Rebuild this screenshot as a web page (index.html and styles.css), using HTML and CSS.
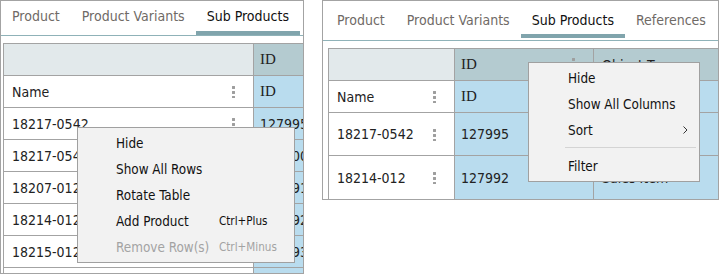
FILE: index.html
```html
<!DOCTYPE html>
<html>
<head>
<title>Sub Products</title>
<link rel="stylesheet" href="styles.css">
</head>
<body>

<div class="panel panel--rows">
  <div class="tabs">
    <div class="tab">Product</div>
    <div class="tab">Product Variants</div>
    <div class="tab tab--active">Sub Products</div>
  </div>
  <div class="tabla tabla--rows">
    <div class="celda celda--esquina"></div>
    <div class="celda celda--cabecera"><span class="serif">ID</span></div>

    <div class="celda">Name<span class="kebab"></span></div>
    <div class="celda celda--azul"><span class="serif">ID</span></div>

    <div class="celda">18217-0542<span class="kebab"></span></div>
    <div class="celda celda--azul">127995</div>
    <div class="celda">18217-0543<span class="kebab"></span></div>
    <div class="celda celda--azul">127900</div>
    <div class="celda">18207-0123<span class="kebab"></span></div>
    <div class="celda celda--azul">127991</div>
    <div class="celda">18214-012<span class="kebab"></span></div>
    <div class="celda celda--azul">127992</div>
    <div class="celda">18215-012<span class="kebab"></span></div>
    <div class="celda celda--azul">127993</div>
    <div class="celda">18216-012<span class="kebab"></span></div>
    <div class="celda celda--azul">127994</div>
  </div>

  <div class="menu menu--rows">
    <div class="menu__item">Hide</div>
    <div class="menu__item">Show All Rows</div>
    <div class="menu__item">Rotate Table</div>
    <div class="menu__item">Add Product<span class="menu__atajo">Ctrl+Plus</span></div>
    <div class="menu__item menu__item--off">Remove Row(s)<span class="menu__atajo">Ctrl+Minus</span></div>
  </div>
</div>

<div class="panel panel--cols">
  <div class="tabs">
    <div class="tab">Product</div>
    <div class="tab">Product Variants</div>
    <div class="tab tab--active">Sub Products</div>
    <div class="tab">References</div>
  </div>
  <div class="tabla tabla--cols">
    <div class="celda celda--esquina"></div>
    <div class="celda celda--cabecera"><span class="serif">ID</span><span class="kebab kebab--top"></span></div>
    <div class="celda celda--cabecera">Object Type</div>

    <div class="celda">Name<span class="kebab"></span></div>
    <div class="celda celda--azul"><span class="serif">ID</span></div>
    <div class="celda celda--azul">Object Type</div>

    <div class="celda">18217-0542<span class="kebab"></span></div>
    <div class="celda celda--azul">127995</div>
    <div class="celda celda--azul">Sales Item</div>

    <div class="celda">18214-012<span class="kebab"></span></div>
    <div class="celda celda--azul">127992</div>
    <div class="celda celda--azul">Sales Item</div>
  </div>

  <div class="menu menu--cols">
    <div class="menu__item">Hide</div>
    <div class="menu__item">Show All Columns</div>
    <div class="menu__item">Sort
      <svg class="menu__flecha" width="5" height="8" viewBox="0 0 5 8"><polyline points="0.5,0.5 4,4 0.5,7.5" fill="none" stroke="#333" stroke-width="1"/></svg>
    </div>
    <div class="menu__linea"></div>
    <div class="menu__item">Filter</div>
  </div>
</div>

</body>
</html>
```
FILE: styles.css
```css
html {
  font-family: "DejaVu Sans Condensed", "DejaVu Sans", sans-serif;
  font-size: 14px;
  color: #222;
}

body {
  margin: 0;
  display: flex;
  align-items: flex-start;
  gap: 18px;
  background: #fff;
}

.panel {
  position: relative;
  box-sizing: border-box;
  border: 1px solid #a3a3a3;
  overflow: hidden;
}

.panel--rows {
  width: 304px;
  height: 274px;
}

.panel--cols {
  width: 397px;
  height: 200px;
}

/* pestañas */

.tabs {
  display: flex;
  border-bottom: 1px solid #8fb2b8;
}

.panel--rows .tabs {
  height: 34px;
}

.panel--cols .tabs {
  height: 37px;
  padding: 0 0 2px 3px;
}

.tab {
  display: flex;
  align-items: center;
  padding: 0 11px;
  color: #6f6a66;
  white-space: nowrap;
}

.panel--rows .tab {
  padding-bottom: 4px;
}

.tab--active {
  color: #111;
  box-shadow: inset 0 -4px #80a4ac;
}

/* tabla */

.tabla {
  display: grid;
  width: max-content;
  border-top: 1px solid #a3a3a3;
  border-left: 1px solid #a3a3a3;
  margin-top: 7px;
}

.tabla--rows {
  margin-left: 2px;
  grid-template-columns: 250px 140px;
  grid-auto-rows: 32px;
}

.tabla--cols {
  margin-left: 5px;
  grid-template-columns: 126px 139px 150px;
  grid-template-rows: 32px 32px 43px 44px;
}

.celda {
  box-sizing: border-box;
  display: flex;
  align-items: center;
  padding: 0 8px;
  border-right: 1px solid #a3a3a3;
  border-bottom: 1px solid #a3a3a3;
  background: #fff;
  white-space: nowrap;
  overflow: hidden;
}

.celda--esquina {
  background: #e2e9eb;
}

.celda--cabecera {
  background: #b4cbd0;
}

.celda--azul {
  background: #b9dcee;
}

.tabla--rows .celda:nth-child(2n),
.tabla--cols .celda:nth-child(3n+2) {
  padding-left: 6px;
}

.serif {
  font-family: "Liberation Serif", serif;
  font-size: 15px;
}

.kebab {
  width: 3px;
  height: 13px;
  margin-left: auto;
  margin-right: 10px;
  background: radial-gradient(circle, #9e9e9e 1.4px, transparent 1.7px) 0 0 / 3px 5px repeat-y;
}

.kebab--top {
  align-self: flex-start;
  margin-top: 8px;
}

/* menus */

.menu {
  position: absolute;
  box-sizing: border-box;
  border: 1px solid #a0a0a0;
  background: #f2f2f2;
  padding: 2px 0;
  font-size: 13.4px;
  color: #111;
}

.menu--rows {
  left: 76px;
  top: 126px;
  width: 218px;
}

.menu--cols {
  left: 205px;
  top: 61px;
  width: 172px;
}

.menu__item {
  display: flex;
  align-items: center;
  height: 26px;
  padding: 0 11px 0 38px;
  white-space: nowrap;
}

.menu--cols .menu__item {
  padding-left: 39px;
}

.menu__item--off {
  color: #a3a3a3;
}

.menu__atajo {
  position: absolute;
  left: 141px;
  font-size: 11.6px;
}

.menu__flecha {
  margin-left: auto;
}

.menu__linea {
  height: 1px;
  margin: 4px 3px 5px 36px;
  background: #d4d4d4;
}
```
